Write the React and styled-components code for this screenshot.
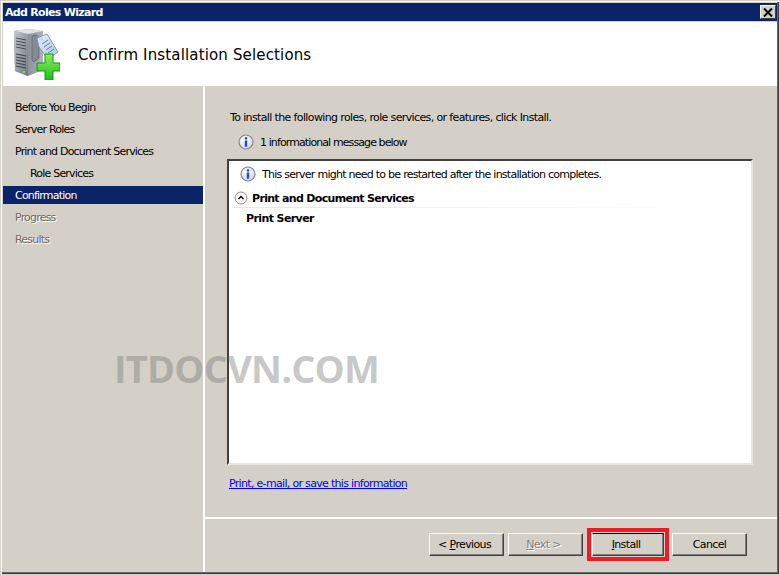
import styled, { createGlobalStyle } from "styled-components";

const GlobalStyle = createGlobalStyle`
  html, body {
    margin: 0;
    padding: 0;
    background: #d4d0c8;
  }
  body {
    font-family: "DejaVu Sans", sans-serif;
    font-size: 11px;
    color: #000;
  }
`;

const Win = styled.div`
  position: relative;
  box-sizing: border-box;
  width: 780px;
  height: 575px;
  overflow: hidden;
  display: flex;
  flex-direction: column;
  padding: 3px;
  background: #d4d0c8;
  box-shadow:
    inset 1px 1px 0 #d4d0c8,
    inset 2px 2px 0 #fff,
    inset -1px -1px 0 #d4d0c8,
    inset -2px -2px 0 #404040,
    inset -3px -3px 0 #666;
`;

const TitleBar = styled.div`
  height: 18px;
  margin-bottom: 1px;
  flex: none;
  display: flex;
  align-items: center;
  justify-content: space-between;
  padding: 0 1px 0 2px;
  background: #0a246a;
  color: #fff;
  font-weight: bold;
  letter-spacing: -0.7px;
`;

const CloseBtn = styled.div`
  box-sizing: border-box;
  width: 16px;
  height: 14px;
  display: flex;
  align-items: center;
  justify-content: center;
  background: #d4d0c8;
  border: 1px solid;
  border-color: #fff #404040 #404040 #fff;
`;

const Header = styled.div`
  height: 64px;
  flex: none;
  display: flex;
  align-items: center;
  background: #fff;
`;

const HeaderIcon = styled.svg`
  width: 48px;
  height: 52px;
  margin-left: 9px;
  flex: none;
`;

const Heading = styled.h1`
  margin: 2px 0 0 18px;
  font-size: 15px;
  font-weight: normal;
  letter-spacing: 0.15px;
`;

const Body = styled.div`
  flex: 1;
  min-height: 0;
  display: flex;
  background: #fff;
`;

const Sidebar = styled.nav`
  width: 200px;
  flex: none;
  margin-right: 2px;
  padding-top: 12px;
  box-sizing: border-box;
  background: #d4d0c8;
  display: flex;
  flex-direction: column;
  gap: 4px;
`;

const NavItem = styled.div`
  height: 18px;
  line-height: 20px;
  padding-left: ${(p) => (p.$sub ? 27 : 12)}px;
  letter-spacing: -0.8px;
  background: ${(p) => (p.$active ? "#0a246a" : "transparent")};
  color: ${(p) => (p.$active ? "#fff" : p.$off ? "#6f6b62" : "#000")};
  text-shadow: ${(p) => (p.$off ? "1px 1px 0 #fff" : "none")};
`;

const Main = styled.div`
  flex: 1;
  min-width: 0;
  display: flex;
  flex-direction: column;
  background: #d4d0c8;
`;

const Content = styled.div`
  flex: 1;
  min-height: 0;
  display: flex;
  flex-direction: column;
  padding: 25px 24px 0 22px;
  letter-spacing: -0.63px;
`;

const Intro = styled.div`
  margin-left: 3px;
  height: 14px;
  line-height: 14px;
`;

const InfoRow = styled.div`
  display: flex;
  align-items: center;
  gap: 6px;
  height: 16px;
  letter-spacing: ${(p) => p.$spacing || -0.9}px;
  margin: ${(p) => p.$margin || "9px 0 0 11px"};
`;

const ListBox = styled.div`
  box-sizing: border-box;
  width: 526px;
  height: 306px;
  margin-top: 9px;
  background: #fff;
  border: 2px solid;
  border-color: #404040 #e8e6e0 #e8e6e0 #404040;
`;

const SectionRow = styled.div`
  display: flex;
  align-items: center;
  gap: 4px;
  height: 16px;
  margin: 8px 0 0 5px;
  font-weight: bold;
  letter-spacing: -0.68px;
`;

const Rule = styled.div`
  height: 1px;
  margin-left: 5px;
  margin-top: 1px;
  background: linear-gradient(to right, #dfe6f5, #fff 90%);
`;

const Feature = styled.div`
  margin: 4px 0 0 17px;
  font-weight: bold;
  height: 14px;
  line-height: 14px;
  letter-spacing: -0.6px;
`;

const Link = styled.a`
  margin: 12px 0 0 2px;
  height: 14px;
  line-height: 14px;
  letter-spacing: -0.68px;
  color: #0000ff;
  text-decoration: underline;
`;

const Footer = styled.div`
  height: 55px;
  flex: none;
  box-sizing: border-box;
  border-top: 2px solid #fff;
  display: flex;
  justify-content: flex-end;
  align-items: flex-start;
  gap: 4px;
  padding: 14px 30px 0 0;
`;

const Button = styled.div`
  box-sizing: border-box;
  width: 75px;
  height: 23px;
  display: flex;
  align-items: center;
  justify-content: center;
  background: #d4d0c8;
  border: 1px solid;
  border-color: #fff #404040 #404040 #fff;
  box-shadow: inset -1px -1px 0 #808080;
  letter-spacing: -0.63px;
  color: ${(p) => (p.$off ? "#808080" : "#000")};
  text-shadow: ${(p) => (p.$off ? "1px 1px 0 #fff" : "none")};
  padding-right: ${(p) => p.$shift || 0}px;
  u {
    text-underline-offset: 1px;
  }
`;

const DefaultButton = styled(Button)`
  position: relative;
  width: 72px;
  margin: 0 4px 0 5px;
  border-color: #000 #404040 #404040 #fff;
  &::after {
    content: "";
    position: absolute;
    inset: -6px;
    border: 4px solid #ed1c24;
  }
`;

const Watermark = styled.div`
  position: absolute;
  left: 114px;
  top: 345px;
  font-family: "Open Sans", sans-serif;
  font-size: 38px;
  line-height: 46px;
  font-weight: 700;
  letter-spacing: -0.8px;
  color: rgba(120, 120, 120, 0.42);
  white-space: nowrap;
`;

const Info = () => (
  <svg width="16" height="16" viewBox="0 0 16 16">
    <defs>
      <radialGradient id="infoFill" cx="40%" cy="35%" r="70%">
        <stop offset="0" stopColor="#ffffff" />
        <stop offset="1" stopColor="#cdd6ec" />
      </radialGradient>
    </defs>
    <circle cx="8" cy="8" r="7" fill="url(#infoFill)" stroke="#85858f" strokeWidth="1.2" />
    <rect x="6.8" y="3.3" width="2.4" height="2.2" fill="#2347c4" />
    <rect x="6.8" y="6.5" width="2.4" height="6.2" fill="#2347c4" />
  </svg>
);

const Collapse = () => (
  <svg width="14" height="14" viewBox="0 0 14 14">
    <circle cx="7" cy="7" r="6" fill="#f4f4f2" stroke="#8f8f8f" />
    <path d="M4.5 8 L7 5.5 L9.5 8" fill="none" stroke="#000" strokeWidth="1.3" />
  </svg>
);

const ServerIcon = () => (
  <HeaderIcon viewBox="0 0 48 52">
    <defs>
      <linearGradient id="front" x1="0" y1="0" x2="1" y2="1">
        <stop offset="0" stopColor="#c6cad0" />
        <stop offset="1" stopColor="#6f7782" />
      </linearGradient>
      <linearGradient id="side" x1="0" x2="1">
        <stop offset="0" stopColor="#6d737c" />
        <stop offset="1" stopColor="#aeb3ba" />
      </linearGradient>
      <linearGradient id="plus" x1="0" y1="0" x2="0" y2="1">
        <stop offset="0" stopColor="#8dee55" />
        <stop offset="1" stopColor="#1fbf22" />
      </linearGradient>
      <linearGradient id="tag" x1="0" y1="0" x2="1" y2="1">
        <stop offset="0" stopColor="#e6f0fb" />
        <stop offset="1" stopColor="#a9c6e8" />
      </linearGradient>
    </defs>
    <path d="M2 3 L17 1 L31 3 L31 42 L16 48 L3 43 Z" fill="url(#side)" />
    <path d="M2 3 L16 6 L16 48 L3 43 Z" fill="url(#front)" />
    <path d="M2 3 L17 1 L31 3 L16 6 Z" fill="#dfe2e6" />
    <path d="M4 10 L14 12 M4 13 L14 15 M4 16 L14 18 M4 19 L14 21" stroke="#48505a" strokeWidth="1.1" />
    <path d="M4 26 L14 28 M4 29 L14 31 M4 32 L14 34 M4 35 L14 37 M4 38 L14 40" stroke="#3e454e" strokeWidth="1.2" />
    <rect x="11" y="43" width="2" height="2" fill="#7de03c" />
    <path d="M20 10 C20 6 26 6 27 10 L27 30 L22 34 L20 32 Z" fill="#858b93" stroke="#5c626a" strokeWidth="0.7" />
    <path d="M25 10 L35 6 L46 24 L36 31 L27 19 Z" fill="url(#tag)" stroke="#7f9cc4" />
    <circle cx="29" cy="11" r="1.2" fill="#fff" stroke="#7f9cc4" strokeWidth="0.5" />
    <path d="M30 16 L36 12 M32 19 L38 15 M34 22 L40 18 M36 25 L42 21" stroke="#5f7ea8" strokeWidth="1" />
    <path d="M33 26 H41 V35 H48 V43 H41 V52 H33 V43 H25 V35 H33 Z" fill="url(#plus)" stroke="#17931b" />
  </HeaderIcon>
);

export default function App() {
  return (
    <>
      <GlobalStyle />
      <Win>
        <TitleBar>
          <span>Add Roles Wizard</span>
          <CloseBtn>
            <svg width="10" height="9" viewBox="0 0 10 9">
              <path d="M1 0.5 L9 8.5 M9 0.5 L1 8.5" stroke="#000" strokeWidth="2" />
            </svg>
          </CloseBtn>
        </TitleBar>
        <Header>
          <ServerIcon />
          <Heading>Confirm Installation Selections</Heading>
        </Header>
        <Body>
          <Sidebar>
            <NavItem>Before You Begin</NavItem>
            <NavItem>Server Roles</NavItem>
            <NavItem>Print and Document Services</NavItem>
            <NavItem $sub>Role Services</NavItem>
            <NavItem $active>Confirmation</NavItem>
            <NavItem $off>Progress</NavItem>
            <NavItem $off>Results</NavItem>
          </Sidebar>
          <Main>
            <Content>
              <Intro>To install the following roles, role services, or features, click Install.</Intro>
              <InfoRow>
                <Info />
                <span>1 informational message below</span>
              </InfoRow>
              <ListBox>
                <InfoRow $margin="5px 0 0 11px" $spacing={-0.74}>
                  <Info />
                  <span>This server might need to be restarted after the installation completes.</span>
                </InfoRow>
                <SectionRow>
                  <Collapse />
                  <span>Print and Document Services</span>
                </SectionRow>
                <Rule />
                <Feature>Print Server</Feature>
              </ListBox>
              <Link>Print, e-mail, or save this information</Link>
            </Content>
            <Footer>
              <Button $shift={4}>&lt;&nbsp;<u>P</u>revious</Button>
              <Button $off $shift={4}><u>N</u>ext &gt;</Button>
              <DefaultButton $shift={4}><u>I</u>nstall</DefaultButton>
              <Button>Cancel</Button>
            </Footer>
          </Main>
        </Body>
        <Watermark>ITDOCVN.COM</Watermark>
      </Win>
    </>
  );
}
